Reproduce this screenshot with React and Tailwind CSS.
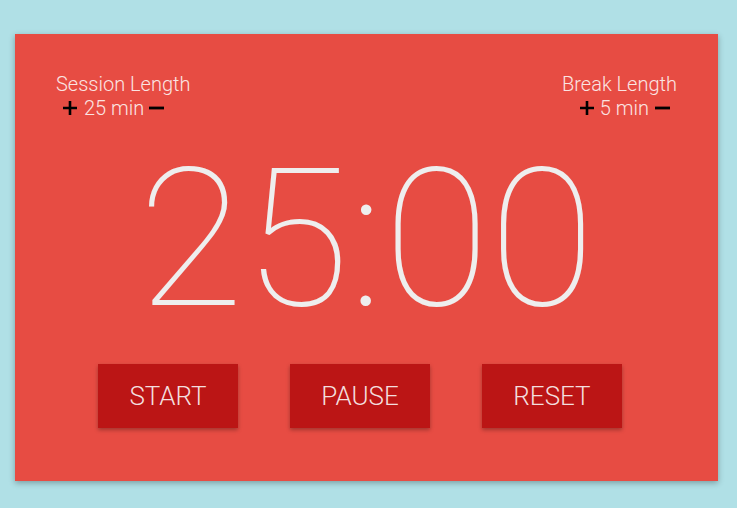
function Plus() {
  return (
    <svg width="14" height="14" viewBox="0 0 14 14" className="shrink-0">
      <path d="M7 0v14M0 7h14" stroke="#000" strokeWidth="2.6" />
    </svg>
  );
}

function Minus() {
  return (
    <svg width="15" height="14" viewBox="0 0 15 14" className="shrink-0">
      <path d="M0 7h15" stroke="#000" strokeWidth="2.8" />
    </svg>
  );
}

export default function App() {
  return (
    <div className="min-h-[508px] w-full bg-[#b0e0e6] pt-[34px] pl-[15px] font-['Roboto',sans-serif]">
      <div className="flex h-[447px] w-[703px] flex-col bg-[#e74c43] px-[41px] pt-[38px] text-[#fbe4e2] shadow-[0_2px_6px_rgba(0,0,0,0.3)]">
        {/* lengths */}
        <div className="flex justify-between text-[20px] font-light leading-[24px]">
          <div>
            <div>Session Length</div>
            <div className="flex items-center pl-[7px]">
              <Plus />
              <span className="ml-[7px]">25 min</span>
              <span className="ml-[5px]"><Minus /></span>
            </div>
          </div>
          <div className="text-right">
            <div>Break Length</div>
            <div className="flex items-center justify-end pr-[7px]">
              <Plus />
              <span className="ml-[6px]">5 min</span>
              <span className="ml-[6px]"><Minus /></span>
            </div>
          </div>
        </div>

        {/* timer */}
        <div className="mt-[22px] text-center text-[193px] font-thin leading-[194px] text-[#eeeeee]">
          25:00
        </div>

        {/* controls */}
        <div className="mt-[28px] flex gap-[52px] pl-[42px]">
          {['START', 'PAUSE', 'RESET'].map((label) => (
            <button
              key={label}
              className="h-[64px] w-[140px] bg-[#bb1515] text-[26px] font-light text-[#f3dede] shadow-[0_2px_4px_rgba(0,0,0,0.3)]"
            >
              {label}
            </button>
          ))}
        </div>
      </div>
    </div>
  );
}
